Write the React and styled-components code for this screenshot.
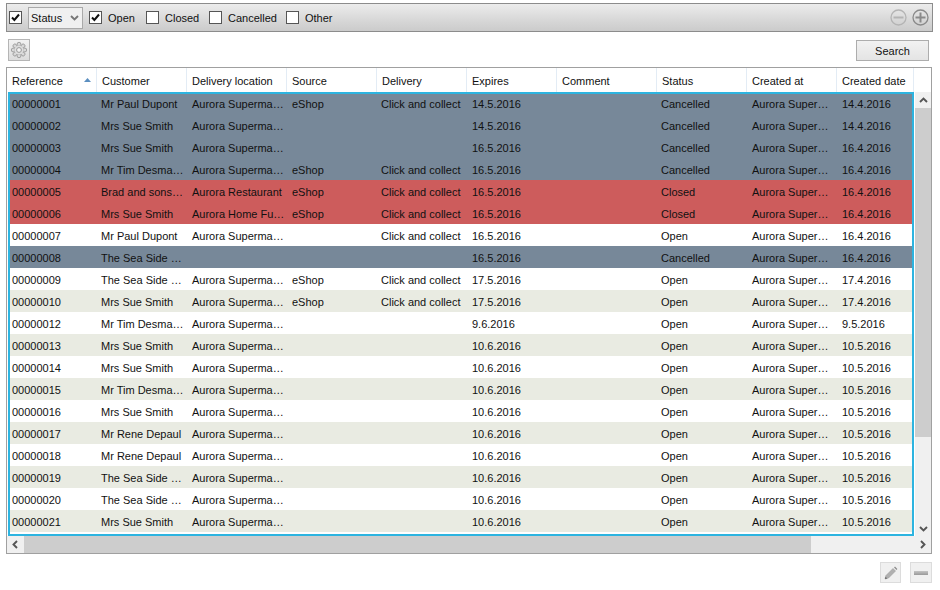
import React from 'react';
import styled, { createGlobalStyle } from 'styled-components';

const Global = createGlobalStyle`
  html, body { margin: 0; padding: 0; background: #fff; overflow: hidden; }
  body { font-family: 'Liberation Sans', Arial, sans-serif; font-size: 11px; color: #111; }
`;

const Page = styled.div`
  width: 940px;
  height: 590px;
  padding: 3px 7px 0 6px;
  box-sizing: border-box;
  display: flex;
  flex-direction: column;
`;

const FilterBar = styled.div`
  height: 29px;
  flex: none;
  box-sizing: border-box;
  border: 1px solid #8c8c8c;
  background: linear-gradient(#ececec, #d9d9d9 55%, #cbcbcb);
  display: flex;
  align-items: center;
  padding: 0 3px 0 2px;
`;

const Check = styled.span`
  width: 13px;
  height: 13px;
  flex: none;
  box-sizing: border-box;
  border: 1px solid #555;
  background: #fff;
  display: flex;
  align-items: center;
  justify-content: center;
`;

const CheckLabel = styled.label`
  display: flex;
  align-items: center;
  gap: 6px;
  width: ${p => p.$w}px;
  line-height: 16px;
`;

const Select = styled.div`
  width: 55px;
  height: 22px;
  box-sizing: border-box;
  border: 1px solid #a9a9a9;
  background: #f0f0f0;
  margin: 0 6px;
  padding: 0 3px 0 2px;
  display: flex;
  align-items: center;
  justify-content: space-between;
`;

const Spacer = styled.div`
  flex: 1;
`;

const RoundButton = styled.svg`
  width: 17px;
  height: 17px;
  margin-left: 5px;
  display: block;
`;

const ActionRow = styled.div`
  height: 35px;
  flex: none;
  display: flex;
  align-items: flex-start;
  justify-content: space-between;
  padding: 7px 4px 0 2px;
  box-sizing: border-box;
`;

const IconButton = styled.div`
  width: 22px;
  height: 22px;
  box-sizing: border-box;
  border: 1px solid #b5b5b5;
  background: linear-gradient(#f2f2f2, #dcdcdc);
  display: flex;
  align-items: center;
  justify-content: center;
`;

const FooterButton = styled(IconButton)`
  width: ${p => p.$w}px;
  height: 21px;
  border-color: #dcdcdc;
  background: #f0f0f0;
`;

const SearchButton = styled.div`
  width: 73px;
  height: 21px;
  box-sizing: border-box;
  border: 1px solid #adadad;
  background: linear-gradient(#f2f2f2, #e4e4e4);
  display: flex;
  align-items: center;
  justify-content: center;
  margin-top: 1px;
`;

const TableFrame = styled.div`
  width: 926px;
  height: 487px;
  flex: none;
  box-sizing: border-box;
  border: 1px solid #a0a0a0;
  display: grid;
  grid-template-columns: 908px 16px;
  grid-template-rows: 24px 444px 17px;
  background: #fff;
`;

const HeaderRow = styled.div`
  grid-column: 1 / 3;
  display: flex;
  background: #fff;
`;

const HeaderCell = styled.div`
  width: ${p => p.$w}px;
  box-sizing: border-box;
  flex: none;
  padding-left: 5px;
  line-height: 26px;
  border-right: 1px solid #e3ecf5;
  position: relative;
`;

const SortArrow = styled.svg`
  position: absolute;
  right: 5px;
  top: 10px;
`;

const Rows = styled.div`
  position: relative;
  box-sizing: border-box;
  overflow: hidden;
  padding: 0 3px 0 1px;

  /* focus ring lies over the rows */
  &::after {
    content: '';
    position: absolute;
    inset: 0 1px;
    border: 2px solid #2db4e0;
  }
`;

const Row = styled.div`
  display: flex;
  height: 22px;
  line-height: 24px;
  background: ${p => p.$bg};
`;

const Cell = styled.div`
  width: ${p => p.$w}px;
  flex: none;
  box-sizing: border-box;
  padding: 0 4px;
  white-space: nowrap;
  overflow: hidden;
`;

const VScroll = styled.div`
  background: #f0f0f0;
  display: flex;
  flex-direction: column;
`;

const ScrollEnd = styled.div`
  height: 16px;
  flex: none;
  display: flex;
  align-items: center;
  justify-content: center;
`;

const VThumb = styled.div`
  flex: 1;
  background: #cdcdcd;
  margin-bottom: 83px;
`;

const HScroll = styled.div`
  grid-column: 1 / 3;
  background: #f0f0f0;
  display: flex;
  align-items: stretch;
`;

const HEnd = styled.div`
  width: 17px;
  flex: none;
  display: flex;
  align-items: center;
  justify-content: center;
`;

const HThumb = styled.div`
  width: 787px;
  background: #cdcdcd;
`;

const Footer = styled.div`
  display: flex;
  justify-content: flex-end;
  gap: 9px;
  padding: 8px 1px 0 0;
`;

const headerWidths = [90, 90, 100, 90, 90, 90, 100, 90, 90, 77];
const cellWidths = [89, 91, 100, 89, 91, 89, 100, 91, 90, 74];
const headers = ['Reference', 'Customer', 'Delivery location', 'Source', 'Delivery', 'Expires', 'Comment', 'Status', 'Created at', 'Created date'];

const GREY = '#778899';
const RED = '#cd5c5c';
const WHITE = '#ffffff';
const BEIGE = '#e9ebe2';

const SM = 'Aurora Superma…';
const CC = 'Click and collect';
const AS = 'Aurora Super…';

const rows = [
  [GREY, '00000001', 'Mr Paul Dupont', SM, 'eShop', CC, '14.5.2016', '', 'Cancelled', AS, '14.4.2016'],
  [GREY, '00000002', 'Mrs Sue Smith', SM, '', '', '14.5.2016', '', 'Cancelled', AS, '14.4.2016'],
  [GREY, '00000003', 'Mrs Sue Smith', SM, '', '', '16.5.2016', '', 'Cancelled', AS, '16.4.2016'],
  [GREY, '00000004', 'Mr Tim Desma…', SM, 'eShop', CC, '16.5.2016', '', 'Cancelled', AS, '16.4.2016'],
  [RED, '00000005', 'Brad and sons…', 'Aurora Restaurant', 'eShop', CC, '16.5.2016', '', 'Closed', AS, '16.4.2016'],
  [RED, '00000006', 'Mrs Sue Smith', 'Aurora Home Fu…', 'eShop', CC, '16.5.2016', '', 'Closed', AS, '16.4.2016'],
  [WHITE, '00000007', 'Mr Paul Dupont', SM, '', CC, '16.5.2016', '', 'Open', AS, '16.4.2016'],
  [GREY, '00000008', 'The Sea Side …', '', '', '', '16.5.2016', '', 'Cancelled', AS, '16.4.2016'],
  [WHITE, '00000009', 'The Sea Side …', SM, 'eShop', CC, '17.5.2016', '', 'Open', AS, '17.4.2016'],
  [BEIGE, '00000010', 'Mrs Sue Smith', SM, 'eShop', CC, '17.5.2016', '', 'Open', AS, '17.4.2016'],
  [WHITE, '00000012', 'Mr Tim Desma…', SM, '', '', '9.6.2016', '', 'Open', AS, '9.5.2016'],
  [BEIGE, '00000013', 'Mrs Sue Smith', SM, '', '', '10.6.2016', '', 'Open', AS, '10.5.2016'],
  [WHITE, '00000014', 'Mrs Sue Smith', SM, '', '', '10.6.2016', '', 'Open', AS, '10.5.2016'],
  [BEIGE, '00000015', 'Mr Tim Desma…', SM, '', '', '10.6.2016', '', 'Open', AS, '10.5.2016'],
  [WHITE, '00000016', 'Mrs Sue Smith', SM, '', '', '10.6.2016', '', 'Open', AS, '10.5.2016'],
  [BEIGE, '00000017', 'Mr Rene Depaul', SM, '', '', '10.6.2016', '', 'Open', AS, '10.5.2016'],
  [WHITE, '00000018', 'Mr Rene Depaul', SM, '', '', '10.6.2016', '', 'Open', AS, '10.5.2016'],
  [BEIGE, '00000019', 'The Sea Side …', SM, '', '', '10.6.2016', '', 'Open', AS, '10.5.2016'],
  [WHITE, '00000020', 'The Sea Side …', SM, '', '', '10.6.2016', '', 'Open', AS, '10.5.2016'],
  [BEIGE, '00000021', 'Mrs Sue Smith', SM, '', '', '10.6.2016', '', 'Open', AS, '10.5.2016'],
];

const Tick = () => (
  <svg width="9" height="9" viewBox="0 0 9 9">
    <path d="M1 4.5 L3.4 7 L8 1.5" fill="none" stroke="#111" strokeWidth="2" />
  </svg>
);

const Chevron = ({ d, color = '#555' }) => (
  <svg width="9" height="9" viewBox="0 0 9 9">
    <path d={d} fill="none" stroke={color} strokeWidth="1.9" />
  </svg>
);

const Circle = ({ plus, color }) => (
  <RoundButton viewBox="0 0 17 17">
    <circle cx="8.5" cy="8.5" r="7.5" fill="none" stroke={color} strokeWidth="1.3" />
    <path d="M3.5 8.5 H13.5" stroke={color} strokeWidth="2" />
    {plus && <path d="M8.5 3.5 V13.5" stroke={color} strokeWidth="2" />}
  </RoundButton>
);

const lobes = [0, 45, 90, 135, 180, 225, 270, 315];

const Gear = () => (
  <svg width="18" height="18" viewBox="0 0 18 18">
    {lobes.map(a => (
      <circle key={a} cx="9" cy="3.2" r="1.9" fill="#d8d8d8" stroke="#9a9a9a" strokeWidth="0.9" transform={`rotate(${a} 9 9)`} />
    ))}
    <circle cx="9" cy="9" r="4.6" fill="#dedede" />
    <circle cx="9" cy="9" r="2.4" fill="#f4f4f4" stroke="#9a9a9a" strokeWidth="1" />
  </svg>
);

export default function App() {
  return (
    <Page>
      <Global />
      <FilterBar>
        <Check><Tick /></Check>
        <Select>
          <span>Status</span>
          <Chevron d="M1 3 L4.5 6.5 L8 3" color="#777" />
        </Select>
        <CheckLabel $w={57}><Check><Tick /></Check>Open</CheckLabel>
        <CheckLabel $w={63}><Check />Closed</CheckLabel>
        <CheckLabel $w={77}><Check />Cancelled</CheckLabel>
        <CheckLabel $w={50}><Check />Other</CheckLabel>
        <Spacer />
        <Circle color="#b4b4b4" />
        <Circle plus color="#8a8a8a" />
      </FilterBar>
      <ActionRow>
        <IconButton><Gear /></IconButton>
        <SearchButton>Search</SearchButton>
      </ActionRow>
      <TableFrame>
        <HeaderRow>
          {headers.map((h, i) => (
            <HeaderCell key={h} $w={headerWidths[i]}>
              {h}
              {i === 0 && (
                <SortArrow width="7" height="4" viewBox="0 0 7 4">
                  <path d="M0 4 L3.5 0 L7 4 Z" fill="#5b8fc0" />
                </SortArrow>
              )}
            </HeaderCell>
          ))}
        </HeaderRow>
        <Rows>
          {rows.map(([bg, ...cells]) => (
            <Row key={cells[0]} $bg={bg}>
              {cells.map((c, i) => <Cell key={i} $w={cellWidths[i]}>{c}</Cell>)}
            </Row>
          ))}
        </Rows>
        <VScroll>
          <ScrollEnd><Chevron d="M1 6 L4.5 2.5 L8 6" /></ScrollEnd>
          <VThumb />
          <ScrollEnd><Chevron d="M1 3 L4.5 6.5 L8 3" /></ScrollEnd>
        </VScroll>
        <HScroll>
          <HEnd><Chevron d="M6 1 L2.5 4.5 L6 8" /></HEnd>
          <HThumb />
          <Spacer />
          <HEnd><Chevron d="M3 1 L6.5 4.5 L3 8" /></HEnd>
        </HScroll>
      </TableFrame>
      <Footer>
        <FooterButton $w={21}>
          <svg width="14" height="14" viewBox="0 0 14 14">
            <path d="M1 13 L2 9.5 L9 2.5 L11.5 5 L4.5 12 Z" fill="#b0b0b0" stroke="#9a9a9a" strokeWidth="0.6" />
            <path d="M1 13 L1.6 10.8 L3.2 12.4 Z" fill="#666" />
            <path d="M10 1.5 L11 0.6 L13.4 3 L12.5 4 Z" fill="#8c8c8c" />
          </svg>
        </FooterButton>
        <FooterButton $w={22}>
          <svg width="14" height="4" viewBox="0 0 14 4">
            <defs>
              <linearGradient id="minusBar" x1="0" y1="0" x2="0" y2="1">
                <stop offset="0" stopColor="#c4c4c4" />
                <stop offset="1" stopColor="#999" />
              </linearGradient>
            </defs>
            <rect width="14" height="4" fill="url(#minusBar)" />
          </svg>
        </FooterButton>
      </Footer>
    </Page>
  );
}
